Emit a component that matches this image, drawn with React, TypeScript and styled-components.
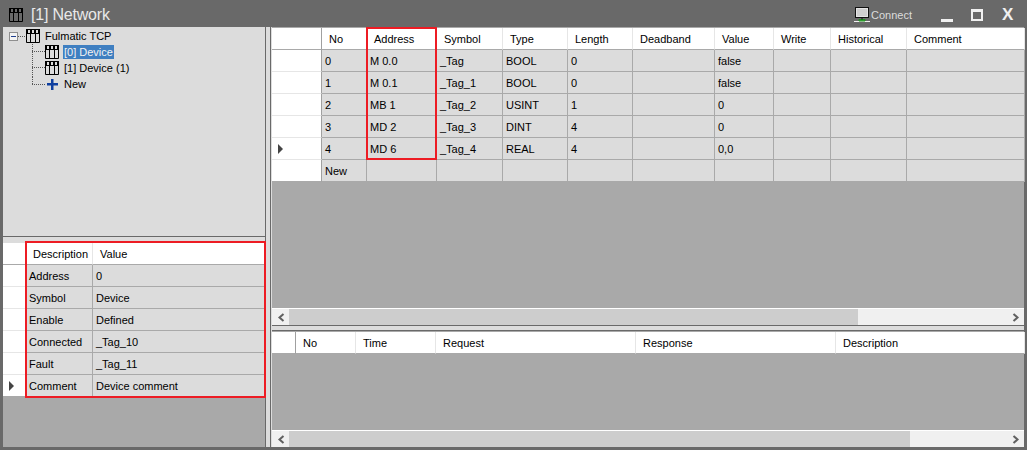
import React from 'react'
import styled, { createGlobalStyle } from 'styled-components'

const GlobalStyle = createGlobalStyle`
  html, body {
    margin: 0;
    padding: 0;
    background: #696969;
  }
  * {
    box-sizing: border-box;
  }
`

const Window = styled.div`
  width: 1027px;
  height: 450px;
  display: flex;
  flex-direction: column;
  background: #696969;
  font-family: 'Liberation Sans', Arial, sans-serif;
  font-size: 11px;
  color: #000;
  overflow: hidden;
`

const TitleBar = styled.div`
  height: 27px;
  flex: none;
  display: flex;
  align-items: center;
  padding: 2px 0 0 9px;
`

const TitleText = styled.span`
  margin-left: 8px;
  font-size: 16px;
  letter-spacing: -0.2px;
  color: #e8e8e8;
  flex: 1;
`

const ConnectButton = styled.div`
  display: flex;
  align-items: center;
  gap: 1px;
  color: #dcdcdc;
  font-size: 11px;
  margin-right: 29px;
`

const Controls = styled.div`
  display: flex;
  align-items: center;
  height: 100%;
`

const MinButton = styled.div`
  width: 12px;
  height: 3px;
  margin: 11px 18px 0 0;
  background: #f0f0f0;
`

const MaxButton = styled.div`
  width: 12px;
  height: 12px;
  margin-right: 18px;
  border: 2px solid #f0f0f0;
  border-top-width: 3px;
`

const CloseButton = styled.div`
  width: 26px;
  padding-left: 1px;
  font-size: 17px;
  font-weight: 700;
  color: #f0f0f0;
`

const Body = styled.div`
  flex: 1;
  min-height: 0;
  display: flex;
  padding: 0 3px 3px;
`

const LeftColumn = styled.div`
  width: 263px;
  flex: none;
  display: flex;
  flex-direction: column;
  background: #dcdcdc;
  border-right: 1px solid #696969;
`

const Splitter = styled.div`
  width: 4px;
  flex: none;
  background: #dcdcdc;
`

const RightColumn = styled.div`
  flex: 1;
  min-width: 0;
  display: flex;
  flex-direction: column;
  background: #dcdcdc;
  border-left: 1px solid #696969;
  padding-left: 1px;
`

const TreePanel = styled.div`
  height: 210px;
  flex: none;
  padding: 1px 0 0 6px;
  background: #dcdcdc;
  border-bottom: 1px solid #696969;
`

const TreeRow = styled.div`
  height: 16px;
  display: flex;
  align-items: center;
  white-space: nowrap;
`

const Expander = styled.div`
  width: 9px;
  height: 9px;
  flex: none;
  display: flex;
  align-items: center;
  justify-content: center;
  border: 1px solid #8f8f8f;
  background: #f4f4f4;
  &::after {
    content: '';
    width: 5px;
    height: 1px;
    background: #1f3f8f;
  }
`

const RootDots = styled.div`
  width: 7px;
  margin-right: 1px;
  border-top: 1px dotted #555;
`

const TreeLabel = styled.span<{ $selected?: boolean }>`
  margin-left: 4px;
  padding: 0 1px;
  height: 14px;
  line-height: 14px;
  background: ${(p) => (p.$selected ? '#3f7fc1' : 'transparent')};
  color: ${(p) => (p.$selected ? '#f2f2f2' : '#000')};
`

const Connector = styled.div<{ $last?: boolean }>`
  width: 13px;
  height: 16px;
  flex: none;
  margin-left: 23px;
  display: flex;
  flex-direction: column;
  &::before {
    content: '';
    height: ${(p) => (p.$last ? '8px' : '16px')};
    border-left: 1px dotted #555;
  }
  &::after {
    content: '';
    position: relative;
    top: ${(p) => (p.$last ? '0' : '-8px')};
    border-top: 1px dotted #555;
  }
`

const PlusSlot = styled.div`
  width: 14px;
  display: flex;
  justify-content: center;
  flex: none;
`

const PropertiesPanel = styled.div`
  position: relative;
  flex: 1;
  background: #a9a9a9;
`

const PropertiesGap = styled.div`
  height: 6px;
  background: #dcdcdc;
`

const TablePanel = styled.div<{ $height: number }>`
  position: relative;
  height: ${(p) => p.$height}px;
  flex: none;
  display: flex;
  flex-direction: column;
  background: #a9a9a9;
  padding-top: 1px;
`

const TableArea = styled.div`
  flex: 1;
  min-height: 0;
`

const SplitBar = styled.div`
  height: 6px;
  flex: none;
  background: #dcdcdc;
  border-top: 1px solid #696969;
  border-bottom: 1px solid #696969;
`

const DataGrid = styled.div<{ $columns: string }>`
  display: grid;
  grid-template-columns: ${(p) => p.$columns};
  grid-auto-rows: 22px;
`

const HeadCell = styled.div`
  display: flex;
  align-items: center;
  padding-left: 7px;
  background: #fff;
  border-right: 1px solid #e6e6e6;
  border-bottom: 1px solid #a9a9a9;
  white-space: nowrap;
  overflow: hidden;
`

const RowHead = styled.div<{ $edge?: boolean }>`
  display: flex;
  align-items: center;
  padding-left: 6px;
  background: #fff;
  border-right: 1px solid #a0a0a0;
  border-bottom: 1px solid ${(p) => (p.$edge ? '#a9a9a9' : '#e6e6e6')};
`

const Cell = styled.div`
  display: flex;
  align-items: center;
  padding-left: 3px;
  background: #dcdcdc;
  border-right: 1px solid #a9a9a9;
  border-bottom: 1px solid #a9a9a9;
  white-space: nowrap;
  overflow: hidden;
`

const RowArrow = styled.div`
  width: 0;
  height: 0;
  border-left: 5px solid #444;
  border-top: 5px solid transparent;
  border-bottom: 5px solid transparent;
`

const Highlight = styled.div<{ $left: number; $top: number; $width: number; $height: number }>`
  position: absolute;
  left: ${(p) => p.$left}px;
  top: ${(p) => p.$top}px;
  width: ${(p) => p.$width}px;
  height: ${(p) => p.$height}px;
  border: 2px solid #ed1c24;
  pointer-events: none;
`

const ScrollBar = styled.div`
  height: 17px;
  flex: none;
  display: flex;
  align-items: stretch;
  background: #f0f0f0;
  border-top: 1px solid #fff;
`

const ScrollButton = styled.div`
  width: 17px;
  flex: none;
  display: flex;
  align-items: center;
  justify-content: center;
  color: #606060;
`

const ScrollTrack = styled.div`
  flex: 1;
  display: flex;
`

const ScrollThumb = styled.div<{ $width: number }>`
  width: ${(p) => p.$width}px;
  background: #cdcdcd;
`

function TableIcon() {
  return (
    <svg width="14" height="14" viewBox="0 0 14 14" style={{ flex: 'none' }}>
      <path d="M0 0h14v5H0z M2 1v3h2V1z M6 1v3h2V1z M10 1v3h2V1z" fill="#000" fillRule="evenodd" />
      <path d="M.5 5v8.500h13V5 M4.500 5v8.500 M9.500 5v8.500" fill="none" stroke="#000" />
    </svg>
  )
}

function PlusIcon() {
  return (
    <svg width="11" height="11" viewBox="0 0 11 11">
      <path d="M4 0h2.500v4H11v2.500H6.500V11H4V6.500H0V4h4z" fill="#0f3f9f" />
    </svg>
  )
}

function MonitorIcon() {
  return (
    <svg width="16" height="16" viewBox="0 0 16 16" style={{ flex: 'none' }}>
      <rect x="1.500" y="0.500" width="13" height="10" fill="#e4e4e4" stroke="#111" />
      <rect x="3" y="2" width="10" height="7" fill="#cfcfcf" />
      <path d="M0 14.500h16" stroke="#f0f0f0" />
      <path d="M5 14v-1.500h6V14z" fill="#3fae3f" stroke="#1f8f1f" />
      <path d="M8 10.500v2" stroke="#111" />
    </svg>
  )
}

function Chevron({ right }: { right?: boolean }) {
  return (
    <svg width="8" height="9" viewBox="0 0 8 9">
      <path
        d={right ? 'M1.500 1l4 3.500-4 3.500' : 'M6.500 1l-4 3.500 4 3.500'}
        fill="none"
        stroke="currentColor"
        strokeWidth="2"
      />
    </svg>
  )
}

function GridTable(props: {
  columns: string
  headers: string[]
  rows: string[][]
  current?: number
}) {
  return (
    <DataGrid $columns={props.columns}>
      <RowHead $edge />
      {props.headers.map((h) => (
        <HeadCell key={h}>{h}</HeadCell>
      ))}
      {props.rows.map((row, i) => (
        <React.Fragment key={i}>
          <RowHead $edge={i === props.rows.length - 1}>
            {i === props.current && <RowArrow />}
          </RowHead>
          {row.map((c, j) => (
            <Cell key={j}>{c}</Cell>
          ))}
        </React.Fragment>
      ))}
    </DataGrid>
  )
}

function HScroll({ thumb }: { thumb: number }) {
  return (
    <ScrollBar>
      <ScrollButton>
        <Chevron />
      </ScrollButton>
      <ScrollTrack>
        <ScrollThumb $width={thumb} />
      </ScrollTrack>
      <ScrollButton>
        <Chevron right />
      </ScrollButton>
    </ScrollBar>
  )
}

const tagRows = [
  ['0', 'M 0.0', '_Tag', 'BOOL', '0', '', 'false', '', '', ''],
  ['1', 'M 0.1', '_Tag_1', 'BOOL', '0', '', 'false', '', '', ''],
  ['2', 'MB 1', '_Tag_2', 'USINT', '1', '', '0', '', '', ''],
  ['3', 'MD 2', '_Tag_3', 'DINT', '4', '', '0', '', '', ''],
  ['4', 'MD 6', '_Tag_4', 'REAL', '4', '', '0,0', '', '', ''],
  ['New', '', '', '', '', '', '', '', '', ''],
]

const propRows = [
  ['Address', '0'],
  ['Symbol', 'Device'],
  ['Enable', 'Defined'],
  ['Connected', '_Tag_10'],
  ['Fault', '_Tag_11'],
  ['Comment', 'Device comment'],
]

export default function App() {
  return (
    <Window>
      <GlobalStyle />
      <TitleBar>
        <TableIcon />
        <TitleText>[1] Network</TitleText>
        <ConnectButton>
          <MonitorIcon />
          Connect
        </ConnectButton>
        <Controls>
          <MinButton />
          <MaxButton />
          <CloseButton>X</CloseButton>
        </Controls>
      </TitleBar>
      <Body>
        <LeftColumn>
          <TreePanel>
            <TreeRow>
              <Expander />
              <RootDots />
              <TableIcon />
              <TreeLabel>Fulmatic TCP</TreeLabel>
            </TreeRow>
            <TreeRow>
              <Connector />
              <TableIcon />
              <TreeLabel $selected>[0] Device</TreeLabel>
            </TreeRow>
            <TreeRow>
              <Connector />
              <TableIcon />
              <TreeLabel>[1] Device (1)</TreeLabel>
            </TreeRow>
            <TreeRow>
              <Connector $last />
              <PlusSlot>
                <PlusIcon />
              </PlusSlot>
              <TreeLabel>New</TreeLabel>
            </TreeRow>
          </TreePanel>
          <PropertiesPanel>
            <PropertiesGap />
            <GridTable
              columns="23px 67px 172px"
              headers={['Description', 'Value']}
              rows={propRows}
              current={5}
            />
            <Highlight $left={22} $top={4} $width={241} $height={157} />
          </PropertiesPanel>
        </LeftColumn>
        <Splitter />
        <RightColumn>
          <TablePanel $height={298}>
            <TableArea>
              <GridTable
                columns="50px 45px 70px 66px 65px 65px 82px 59px 57px 76px 118px"
                headers={[
                  'No',
                  'Address',
                  'Symbol',
                  'Type',
                  'Length',
                  'Deadband',
                  'Value',
                  'Write',
                  'Historical',
                  'Comment',
                ]}
                rows={tagRows}
                current={4}
              />
            </TableArea>
            <HScroll thumb={569} />
            <Highlight $left={94} $top={0} $width={71} $height={133} />
          </TablePanel>
          <SplitBar />
          <TablePanel $height={116}>
            <TableArea>
              <GridTable
                columns="24px 60px 80px 200px 200px 189px"
                headers={['No', 'Time', 'Request', 'Response', 'Description']}
                rows={[]}
              />
            </TableArea>
            <HScroll thumb={621} />
          </TablePanel>
        </RightColumn>
      </Body>
    </Window>
  )
}
